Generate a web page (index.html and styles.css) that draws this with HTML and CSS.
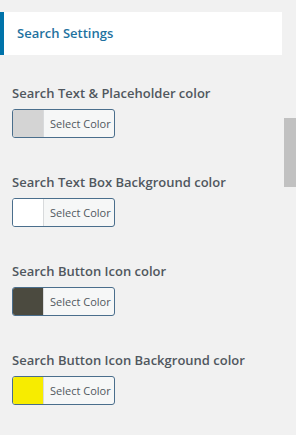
FILE: index.html
```html
<!DOCTYPE html>
<html>
<head>
<meta charset="utf-8">
<link rel="stylesheet" href="styles.css">
</head>
<body>
<div class="panel">
  <div class="header">Search Settings</div>
  <div class="section">
    <div class="label">Search Text &amp; Placeholder color</div>
    <button class="picker"><span class="swatch" style="background:#d4d4d4"></span><span class="btn-text">Select Color</span></button>
  </div>
  <div class="section">
    <div class="label">Search Text Box Background color</div>
    <button class="picker"><span class="swatch" style="background:#ffffff"></span><span class="btn-text">Select Color</span></button>
  </div>
  <div class="section">
    <div class="label">Search Button Icon color</div>
    <button class="picker"><span class="swatch" style="background:#4b4a3f"></span><span class="btn-text">Select Color</span></button>
  </div>
  <div class="section">
    <div class="label">Search Button Icon Background color</div>
    <button class="picker"><span class="swatch" style="background:#f7ec00"></span><span class="btn-text">Select Color</span></button>
  </div>
</div>
<div class="scroll-thumb"></div>
</body>
</html>
```
FILE: styles.css
```css
html, body {
  margin: 0;
  padding: 0;
  background: #f1f1f1;
  font-family: "Open Sans", "Noto Sans", sans-serif;
  overflow: hidden;
}
.panel {
  width: 296px;
  height: 435px;
  padding-top: 12px;
  box-sizing: border-box;
}
.header {
  width: 282px;
  height: 43px;
  box-sizing: border-box;
  background: #ffffff;
  border-left: 4px solid #0073aa;
  padding-left: 13px;
  line-height: 43px;
  font-size: 13px;
  font-weight: 600;
  color: #1f72a0;
  margin-bottom: 28px;
}
.section {
  padding-left: 12px;
  margin-bottom: 34px;
}
.label {
  font-size: 13px;
  font-weight: 600;
  line-height: 20px;
  color: #50575e;
  margin-bottom: 6px;
}
.picker {
  display: flex;
  align-items: stretch;
  width: 103px;
  height: 29px;
  padding: 0;
  margin: 0;
  border: 1px solid #4a6e8c;
  border-radius: 3px;
  background: #f6f7f7;
  overflow: hidden;
  cursor: pointer;
  font-family: inherit;
}
.swatch {
  width: 30px;
  border-right: 1px solid #d8dadc;
}
.btn-text {
  flex: 1;
  font-size: 11px;
  line-height: 27px;
  color: #50575e;
  text-align: left;
  padding-left: 6px;
}
.scroll-thumb {
  position: absolute;
  left: 284px;
  top: 118px;
  width: 12px;
  height: 69px;
  background: #c1c1c1;
}
```
